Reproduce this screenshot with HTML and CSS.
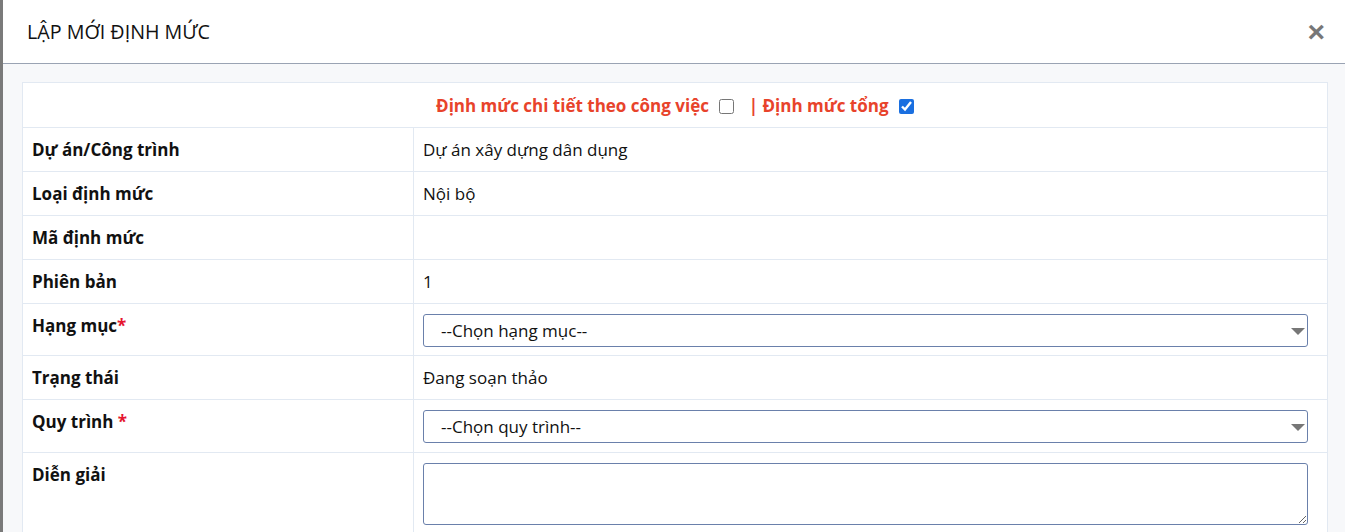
FILE: index.html
```html
<!DOCTYPE html>
<html lang="vi">
<head>
    <meta charset="UTF-8">
    <title>Lập mới định mức</title>
    <link rel="stylesheet" href="styles.css">
</head>
<body>
    <div class="backdrop">
        <div class="modal">
            <div class="modal-header">
                <h4 class="modal-title">LẬP MỚI ĐỊNH MỨC</h4>
                <span class="close">&times;</span>
            </div>
            <div class="modal-body">
                <table class="form-table">
                    <tr>
                        <td colspan="2" class="type-row">
                            Định mức chi tiết theo công việc
                            <input type="checkbox">
                            <span class="sep">| Định mức tổng</span>
                            <input type="checkbox" checked>
                        </td>
                    </tr>
                    <tr>
                        <th>Dự án/Công trình</th>
                        <td>Dự án xây dựng dân dụng</td>
                    </tr>
                    <tr>
                        <th>Loại định mức</th>
                        <td>Nội bộ</td>
                    </tr>
                    <tr>
                        <th>Mã định mức</th>
                        <td></td>
                    </tr>
                    <tr>
                        <th>Phiên bản</th>
                        <td>1</td>
                    </tr>
                    <tr class="field-row short">
                        <th>Hạng mục<span class="req">*</span></th>
                        <td>
                            <div class="select">--Chọn hạng mục--</div>
                        </td>
                    </tr>
                    <tr>
                        <th>Trạng thái</th>
                        <td>Đang soạn thảo</td>
                    </tr>
                    <tr class="field-row">
                        <th>Quy trình <span class="req">*</span></th>
                        <td>
                            <div class="select">--Chọn quy trình--</div>
                        </td>
                    </tr>
                    <tr class="field-row">
                        <th>Diễn giải</th>
                        <td><textarea rows="3"></textarea></td>
                    </tr>
                </table>
            </div>
        </div>
    </div>
</body>
</html>
```

FILE: styles.css
```css
body {
    margin: 0;
    font-family: "Open Sans", "Noto Sans", sans-serif;
    color: #111;
    background-color: #7a7a7a;
    overflow: hidden;
}

.backdrop {
    height: 532px;
    padding-left: 3px;
}

.modal {
    height: 100%;
    background-color: #f7f8fa;
    width: 1360px;
}

.modal-header {
    height: 63px;
    background-color: #fff;
    border-bottom: 1px solid #9aa3b3;
    display: flex;
    align-items: center;
    justify-content: space-between;
    padding: 0 38px 0 24px;
}

.modal-title {
    margin: 0;
    font-size: 19.7px;
    font-weight: normal;
    color: #111;
}

.close {
    font-size: 30px;
    font-weight: bold;
    color: #777;
    line-height: 1;
    font-family: "Liberation Sans", Arial, sans-serif;
}

.modal-body {
    padding: 18px 0 0 19px;
}

.form-table {
    width: 1306px;
    border-collapse: collapse;
    background-color: #fff;
    font-size: 17px;
}

.form-table th,
.form-table td {
    border: 1px solid #e2e9f2;
    text-align: left;
    vertical-align: middle;
    height: 44px;
    padding: 0 9px;
    box-sizing: border-box;
}

.form-table th {
    width: 391px;
    font-weight: 700;
}

.form-table .field-row th {
    vertical-align: top;
    padding-top: 10px;
}

.form-table .field-row td {
    height: 53px;
    padding-top: 10px;
    padding-bottom: 9px;
}

.form-table .field-row.short td {
    height: 52px;
    padding-bottom: 8px;
}

.type-row {
    text-align: center !important;
    color: #e8432b;
    font-weight: 700;
    height: 45px !important;
}

.type-row input {
    width: 15px;
    height: 15px;
    margin: 0 10px 0 6px;
    vertical-align: -2px;
    accent-color: #1a6fe0;
}

.type-row input:last-child {
    margin-right: 0;
}

.req {
    color: #e5162f;
}

.select {
    height: 33px;
    box-sizing: border-box;
    border: 1px solid #6a80ab;
    border-radius: 3px;
    padding: 0 17px;
    line-height: 31px;
    position: relative;
    width: 885px;
}

.select::after {
    content: "";
    position: absolute;
    right: 2px;
    top: 13px;
    border-left: 7px solid transparent;
    border-right: 7px solid transparent;
    border-top: 7px solid #777;
}

textarea {
    display: block;
    width: 885px;
    height: 62px;
    box-sizing: border-box;
    border: 1px solid #6a80ab;
    border-radius: 3px;
    font-family: inherit;
    font-size: 15px;
}
```
